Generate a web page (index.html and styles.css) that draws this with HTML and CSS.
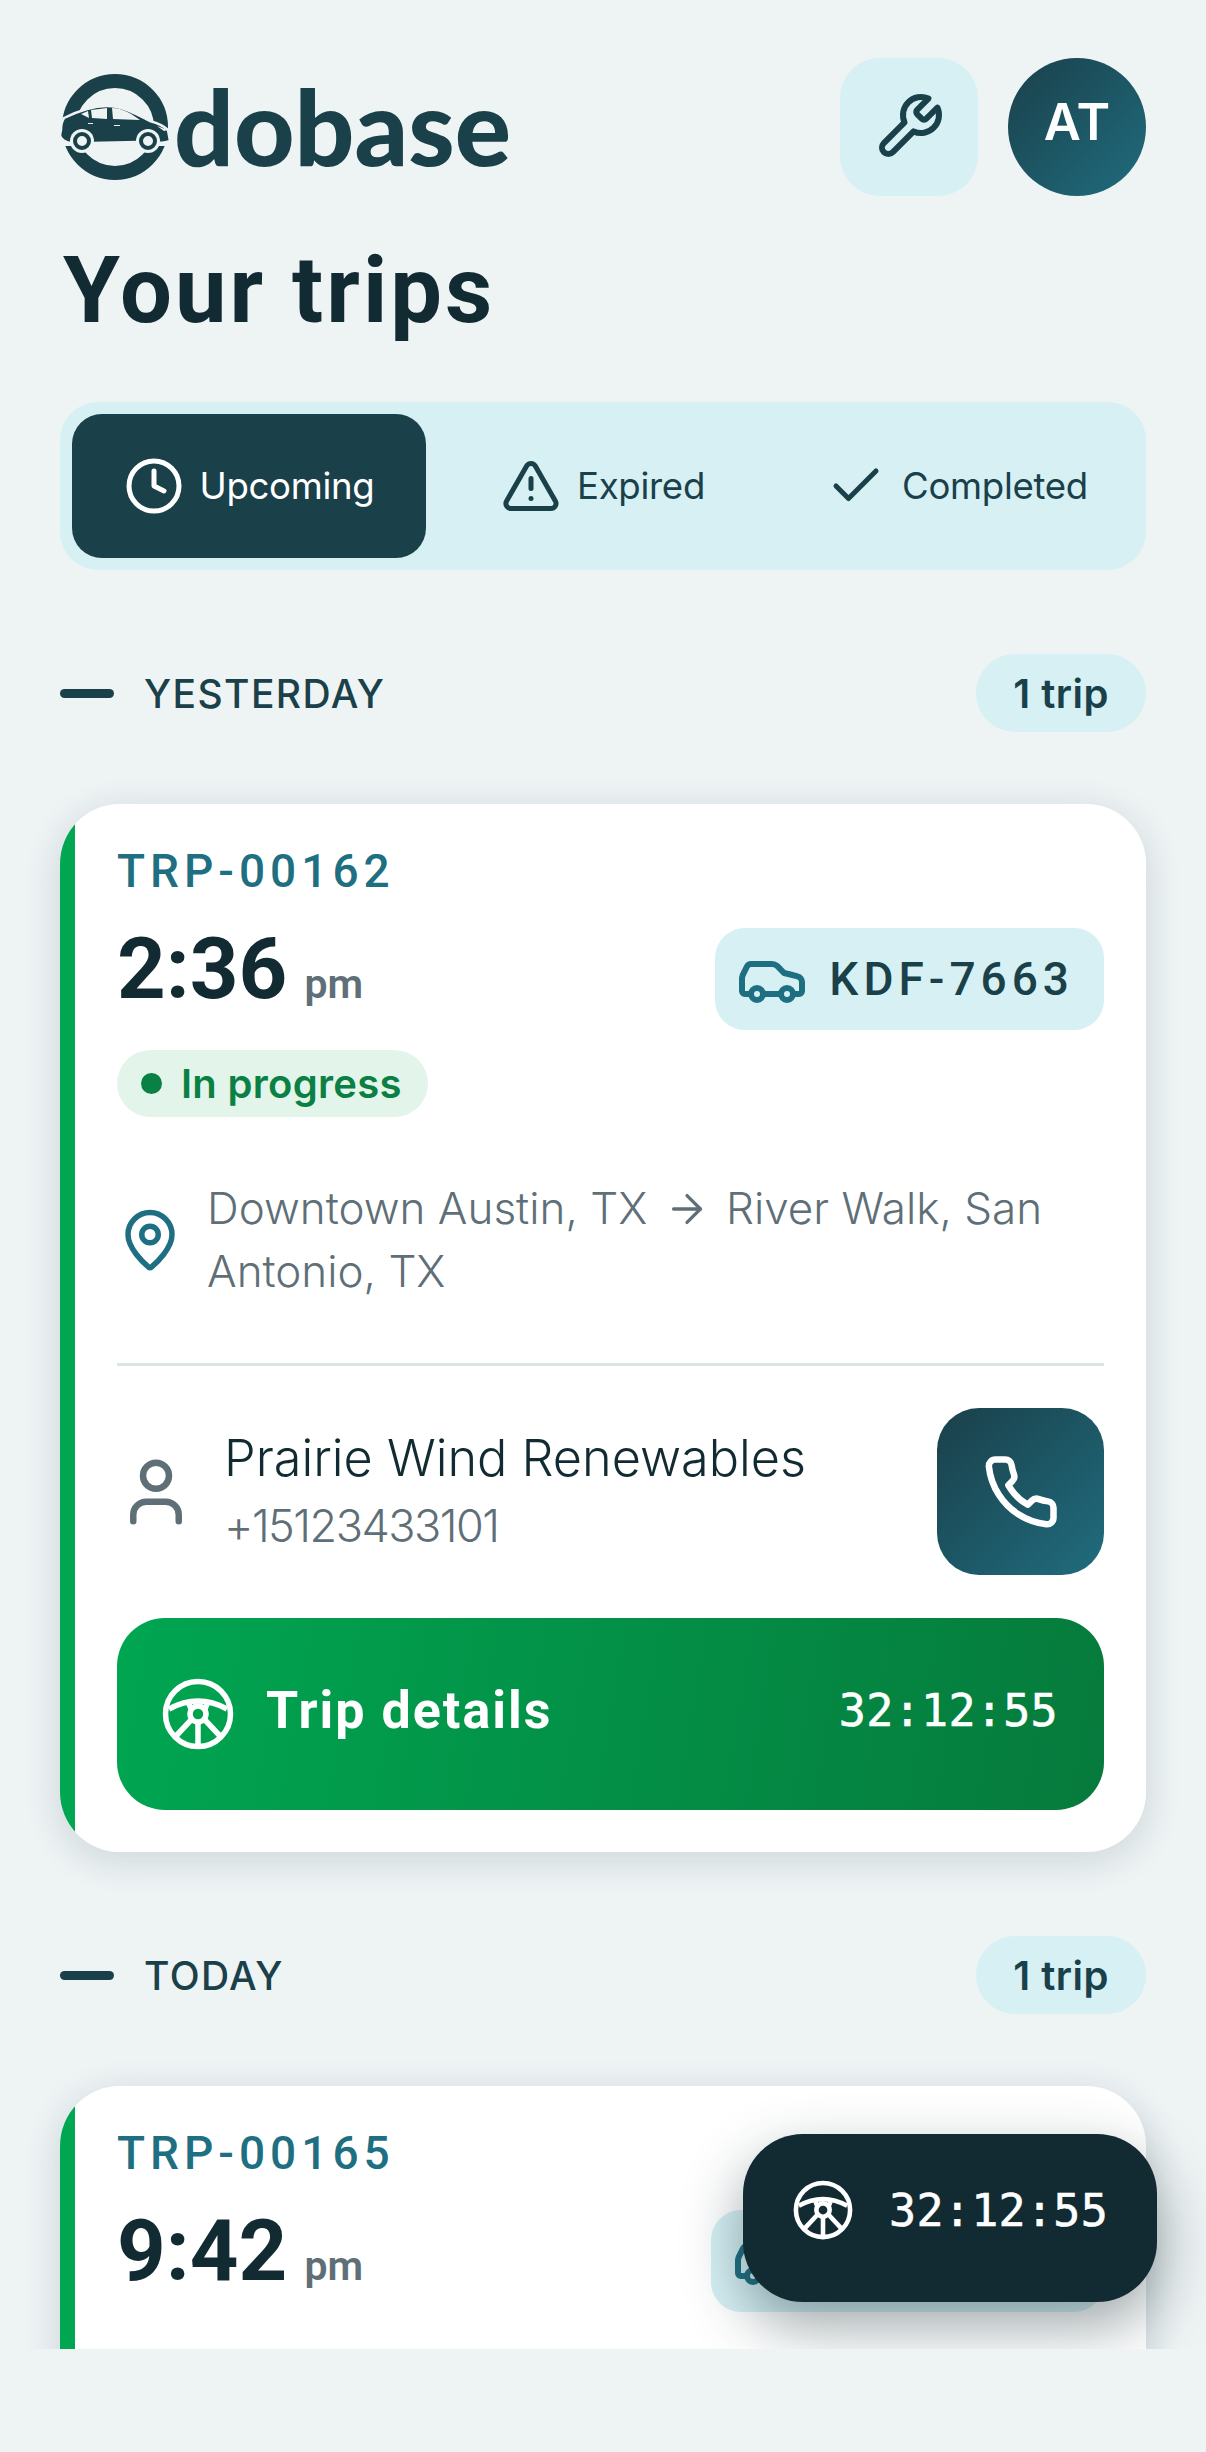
FILE: index.html
```html
<!DOCTYPE html>
<html lang="en">
<head>
    <meta charset="UTF-8">
    <meta name="viewport" content="width=device-width, initial-scale=1.0">
    <title>Your trips</title>
    <link rel="stylesheet" href="styles.css">
</head>
<body>
    <div class="screen">
        <header class="top-bar">
            <div class="logo">
                <svg class="logo-mark" viewBox="0 0 110 108" aria-hidden="true">
                    <circle class="logo-ring" cx="55" cy="54" r="46"/>
                    <rect class="logo-gap" x="0" y="62" width="110" height="11"/>
                    <path class="logo-car" d="M1 57 C1 52 2 48 4 45 C12 41 20 38 27 36 C37 33 48 32 57 34 C68 36 80 43 90 48 C97 50 104 53 108 57 L110 68 C105 70 100 70 98 69 L78 69 L32 70 L12 70 C6 70 0 66 0 62 Z"/>
                    <path class="logo-gap-fill" d="M21 41 L28 38 L29 45 Z M31 37 L47 35 L47 46 L32 45 Z M52 35 C60 35 68 38 80 47 L53 46 Z M97 53 L108 57 L104 58 Z M28 50 H33 V51 H28 Z M54 52 H60 V53 H54 Z"/>
                    <circle class="logo-gap-fill" cx="22" cy="68" r="12"/>
                    <circle class="logo-wheel" cx="22" cy="68" r="7"/>
                    <circle class="logo-gap-fill" cx="88" cy="68" r="12"/>
                    <circle class="logo-wheel" cx="88" cy="68" r="7"/>
                </svg>
                <span class="logo-text">dobase</span>
            </div>
            <div class="top-actions">
                <button class="tool-btn">
                    <svg class="icon" width="72" height="72" viewBox="0 0 24 24"><path d="M14.7 6.3a1 1 0 0 0 0 1.4l1.6 1.6a1 1 0 0 0 1.4 0l3.77-3.77a6 6 0 0 1-7.94 7.94l-6.91 6.91a2.12 2.12 0 0 1-3-3l6.91-6.91a6 6 0 0 1 7.94-7.94l-3.76 3.76z"/></svg>
                </button>
                <div class="avatar"><span>AT</span></div>
            </div>
        </header>

        <h1 class="page-title">Your trips</h1>

        <nav class="tabs">
            <div class="tab active">
                <svg class="icon" width="60" height="60" viewBox="0 0 24 24"><circle cx="12" cy="12" r="10"/><path d="M12 6v6l4 2"/></svg>
                <span>Upcoming</span>
            </div>
            <div class="tab">
                <svg class="icon" width="60" height="60" viewBox="0 0 24 24"><path d="m21.73 18-8-14a2 2 0 0 0-3.48 0l-8 14A2 2 0 0 0 4 21h16a2 2 0 0 0 1.73-3"/><path d="M12 9v4"/><path d="M12 17h.01"/></svg>
                <span>Expired</span>
            </div>
            <div class="tab">
                <svg class="icon" width="60" height="60" viewBox="0 0 24 24"><path d="M20 6 9 17l-5-5"/></svg>
                <span>Completed</span>
            </div>
        </nav>

        <section class="day">
            <div class="day-head">
                <div class="day-label"><i class="day-bar"></i>YESTERDAY</div>
                <div class="day-count">1 trip</div>
            </div>

            <article class="trip-card">
                <div class="trip-id">TRP-00162</div>
                <div class="trip-row">
                    <div class="trip-time">2:36 <small>pm</small></div>
                    <div class="plate">
                        <svg class="icon" width="72" height="72" viewBox="0 0 24 24"><path d="M19 17h2c.6 0 1-.4 1-1v-3c0-.9-.7-1.7-1.5-1.9C18.7 10.6 16 10 16 10s-1.3-1.4-2.2-2.3c-.5-.4-1.1-.7-1.8-.7H5c-.6 0-1.1.4-1.4.9l-1.4 2.9A3.7 3.7 0 0 0 2 12v4c0 .6.4 1 1 1h2"/><circle cx="7" cy="17" r="2"/><path d="M9 17h6"/><circle cx="17" cy="17" r="2"/></svg>
                        <span>KDF-7663</span>
                    </div>
                </div>
                <div class="status"><i class="status-dot"></i>In progress</div>

                <div class="route">
                    <svg class="icon pin" width="66" height="66" viewBox="0 0 24 24"><path d="M20 10c0 4.993-5.539 10.193-7.399 11.799a1 1 0 0 1-1.202 0C9.539 20.193 4 14.993 4 10a8 8 0 0 1 16 0"/><circle cx="12" cy="10" r="3"/></svg>
                    <p>Downtown Austin, TX <svg class="icon arrow" width="46" height="46" viewBox="0 0 24 24"><path d="M5 12h14"/><path d="m12 5 7 7-7 7"/></svg> River Walk, San Antonio, TX</p>
                </div>

                <div class="contact">
                    <svg class="icon person" width="78" height="78" viewBox="0 0 24 24"><path d="M19 21v-2a4 4 0 0 0-4-4H9a4 4 0 0 0-4 4v2"/><circle cx="12" cy="7" r="4"/></svg>
                    <div class="contact-text">
                        <div class="contact-name">Prairie Wind Renewables</div>
                        <div class="contact-phone">+15123433101</div>
                    </div>
                    <button class="call-btn">
                        <svg class="icon" width="78" height="78" viewBox="0 0 24 24"><path d="M22 16.92v3a2 2 0 0 1-2.18 2 19.79 19.79 0 0 1-8.63-3.07 19.5 19.5 0 0 1-6-6 19.79 19.79 0 0 1-3.07-8.67A2 2 0 0 1 4.11 2h3a2 2 0 0 1 2 1.72 12.84 12.84 0 0 0 .7 2.81 2 2 0 0 1-.45 2.11L8.09 9.91a16 16 0 0 0 6 6l1.27-1.27a2 2 0 0 1 2.11-.45 12.84 12.84 0 0 0 2.81.7A2 2 0 0 1 22 16.92z"/></svg>
                    </button>
                </div>

                <button class="details-btn">
                    <span class="details-left">
                        <svg class="wheel" width="72" height="72" viewBox="0 0 72 72"><circle cx="36" cy="36" r="32.5"/><path d="M7 31 Q36 15 65 31"/><circle cx="36" cy="36" r="8"/><path d="M36 45V66"/><path d="M29 42 14 58"/><path d="M43 42 58 58"/><path d="M29 31 27 26M43 31 45 26"/></svg>
                        <span class="details-label">Trip details</span>
                    </span>
                    <span class="timer">32:12:55</span>
                </button>
            </article>
        </section>

        <section class="day">
            <div class="day-head">
                <div class="day-label"><i class="day-bar"></i>TODAY</div>
                <div class="day-count">1 trip</div>
            </div>

            <article class="trip-card cut">
                <div class="trip-id">TRP-00165</div>
                <div class="trip-row">
                    <div class="trip-time">9:42 <small>pm</small></div>
                    <div class="plate">
                        <svg class="icon" width="72" height="72" viewBox="0 0 24 24"><path d="M19 17h2c.6 0 1-.4 1-1v-3c0-.9-.7-1.7-1.5-1.9C18.7 10.6 16 10 16 10s-1.3-1.4-2.2-2.3c-.5-.4-1.1-.7-1.8-.7H5c-.6 0-1.1.4-1.4.9l-1.4 2.9A3.7 3.7 0 0 0 2 12v4c0 .6.4 1 1 1h2"/><circle cx="7" cy="17" r="2"/><path d="M9 17h6"/><circle cx="17" cy="17" r="2"/></svg>
                        <span>KDP-7663</span>
                    </div>
                </div>
            </article>
        </section>

        <div class="float-timer">
            <svg class="wheel" width="60" height="60" viewBox="0 0 72 72"><circle cx="36" cy="36" r="32.5"/><path d="M7 31 Q36 15 65 31"/><circle cx="36" cy="36" r="8"/><path d="M36 45V66"/><path d="M29 42 14 58"/><path d="M43 42 58 58"/><path d="M29 31 27 26M43 31 45 26"/></svg>
            <span class="timer">32:12:55</span>
        </div>
    </div>
</body>
</html>
```

FILE: styles.css
```css
body {
    margin: 0;
    background-color: #eef3f4;
    color: #122a32;
    font-family: Inter, "Liberation Sans", sans-serif;
}
button {
    border: none;
    padding: 0;
    font-family: inherit;
}
p {
    margin: 0;
}
.icon {
    fill: none;
    stroke: currentColor;
    stroke-width: 2;
    stroke-linecap: round;
    stroke-linejoin: round;
    flex-shrink: 0;
}
.wheel {
    fill: none;
    stroke: #fff;
    stroke-width: 5.5;
    flex-shrink: 0;
}
.screen {
    position: relative;
    height: 2349px;
    overflow: hidden;
    padding: 58px 60px 0;
    box-sizing: border-box;
}

/* header */
.top-bar {
    display: flex;
    justify-content: space-between;
    align-items: center;
}
.logo {
    display: flex;
    align-items: center;
    gap: 4px;
    color: #1a404a;
}
.logo-mark {
    width: 110px;
    height: 108px;
}
.logo-ring {
    fill: none;
    stroke: #1a404a;
    stroke-width: 14;
}
.logo-gap {
    fill: #eef3f4;
}
.logo-car {
    fill: #1a404a;
    stroke: #eef3f4;
    stroke-width: 2.5;
}
.logo-gap-fill {
    fill: #eef3f4;
}
.logo-wheel {
    fill: none;
    stroke: #1a404a;
    stroke-width: 4;
}
.logo-text {
    font-family: Lato, sans-serif;
    font-weight: 900;
    font-size: 105px;
    line-height: 108px;
    margin-top: -4px;
}
.top-actions {
    display: flex;
    gap: 30px;
}
.tool-btn {
    width: 138px;
    height: 138px;
    border-radius: 40px;
    background-color: #d6f0f4;
    color: #1a404a;
    display: flex;
    align-items: center;
    justify-content: center;
}
.avatar {
    width: 138px;
    height: 138px;
    border-radius: 50%;
    background: linear-gradient(135deg, #1a404a, #206c7e);
    color: #fff;
    font-weight: 600;
    font-size: 51px;
    display: flex;
    align-items: center;
    justify-content: center;
    padding-bottom: 12px;
    box-sizing: border-box;
}
.page-title {
    margin: 40px 0 0 3px;
    font-family: Roboto, sans-serif;
    font-weight: 700;
    font-size: 92px;
    line-height: 110px;
    letter-spacing: 3px;
}

/* tabs */
.tabs {
    display: grid;
    grid-template-columns: repeat(3, 1fr);
    margin-top: 56px;
    padding: 12px;
    border-radius: 38px;
    background-color: #d6f0f4;
    color: #1a404a;
}
.tab {
    height: 144px;
    border-radius: 30px;
    display: flex;
    align-items: center;
    justify-content: center;
    gap: 16px;
    font-size: 36.6px;
    letter-spacing: -0.3px;
}
.tab.active {
    background-color: #1a404a;
    color: #fff;
}

/* day sections */
.day {
    margin-top: 84px;
}
.day-head {
    display: flex;
    justify-content: space-between;
    align-items: center;
    margin-bottom: 72px;
    color: #1a404a;
}
.day-label {
    display: flex;
    align-items: center;
    gap: 30px;
    font-size: 39px;
    font-weight: 500;
    letter-spacing: 1.4px;
}
.day-bar {
    width: 54px;
    height: 9px;
    border-radius: 5px;
    background-color: #1a404a;
}
.day-count {
    height: 78px;
    padding: 0 37px;
    border-radius: 39px;
    background-color: #d6f0f4;
    display: flex;
    align-items: center;
    font-size: 40px;
    font-weight: 600;
    letter-spacing: 0.5px;
}

/* trip card: the green edge is a hard stop so its inner side stays straight */
.trip-card {
    padding: 40px 42px 42px 57px;
    border-radius: 60px;
    background: linear-gradient(90deg, #00a651 15px, #fff 15px);
    box-shadow: 0 8px 36px rgba(26, 64, 74, 0.16);
}
.trip-card.cut {
    min-height: 420px;
}
.trip-id {
    font-family: Roboto, sans-serif;
    font-weight: 500;
    font-size: 46px;
    line-height: 54px;
    letter-spacing: 5px;
    color: #1f6f82;
}
.trip-row {
    display: flex;
    justify-content: space-between;
    align-items: center;
    margin-top: 29px;
}
.trip-time {
    font-family: Roboto, sans-serif;
    font-weight: 700;
    font-size: 85px;
    line-height: 84px;
    padding-bottom: 4px;
}
.trip-time small {
    margin-left: -4px;
    font-size: 41px;
    font-weight: 600;
    color: #5f6f77;
}
.plate {
    height: 102px;
    padding: 0 30px 0 21px;
    border-radius: 30px;
    background-color: #d6f0f4;
    display: flex;
    align-items: center;
    gap: 21px;
    color: #1f6f82;
}
.plate span {
    font-family: Roboto, sans-serif;
    font-weight: 500;
    font-size: 46px;
    letter-spacing: 5px;
    color: #1a404a;
}
.status {
    display: flex;
    align-items: center;
    gap: 19px;
    width: fit-content;
    height: 67px;
    margin-top: 20px;
    padding: 0 26px 0 24px;
    border-radius: 34px;
    background-color: #e3f5eb;
    color: #0a8044;
    font-size: 40px;
    font-weight: 600;
    letter-spacing: 0.3px;
}
.status-dot {
    width: 21px;
    height: 21px;
    border-radius: 50%;
    background-color: #0a8044;
}
.route {
    display: flex;
    align-items: center;
    gap: 24px;
    margin-top: 60px;
    padding-bottom: 60px;
    border-bottom: 3px solid #d8e6e6;
    color: #5f6f77;
    font-size: 44px;
    font-weight: 300;
    line-height: 63px;
}
.pin {
    color: #1f6f82;
}
.arrow {
    vertical-align: -8px;
    margin: 0 4px;
    stroke-width: 1.7;
}
.contact {
    display: flex;
    align-items: center;
    gap: 29px;
    margin-top: 42px;
}
.person {
    color: #5f6f77;
}
.contact-text {
    flex: 1;
}
.contact-name {
    font-size: 50.4px;
    font-weight: 300;
    line-height: 68px;
}
.contact-phone {
    font-size: 45px;
    font-weight: 300;
    line-height: 68px;
    letter-spacing: -1.5px;
    color: #5f6f77;
}
.call-btn {
    width: 167px;
    height: 167px;
    border-radius: 42px;
    background: linear-gradient(135deg, #1a404a, #206c7e);
    color: #fff;
    display: flex;
    align-items: center;
    justify-content: center;
    flex-shrink: 0;
}
.details-btn {
    width: 100%;
    height: 192px;
    margin-top: 43px;
    padding: 0 46px 0 45px;
    border-radius: 48px;
    background: linear-gradient(100deg, #00a651, #067a3c);
    color: #fff;
    display: flex;
    justify-content: space-between;
    align-items: center;
    box-sizing: border-box;
}
.details-left {
    display: flex;
    align-items: center;
    gap: 32px;
    font-family: Roboto, sans-serif;
    font-weight: 700;
    font-size: 52px;
    letter-spacing: 2px;
}
.details-label {
    padding-bottom: 8px;
}
.details-btn .timer {
    padding-bottom: 8px;
}
.timer {
    font-family: "DejaVu Sans Mono", monospace;
    font-size: 45px;
    letter-spacing: 0.3px;
    color: #fff;
    -webkit-text-stroke: 0.6px #fff;
}

/* floating timer over the list */
.float-timer {
    position: absolute;
    right: 49px;
    bottom: 47px;
    width: 414px;
    height: 168px;
    padding: 0 0 16px 50px;
    border-radius: 60px;
    background-color: #122a32;
    box-shadow: 0 24px 60px rgba(18, 42, 50, 0.42);
    display: flex;
    align-items: center;
    gap: 36px;
    box-sizing: border-box;
}
```
